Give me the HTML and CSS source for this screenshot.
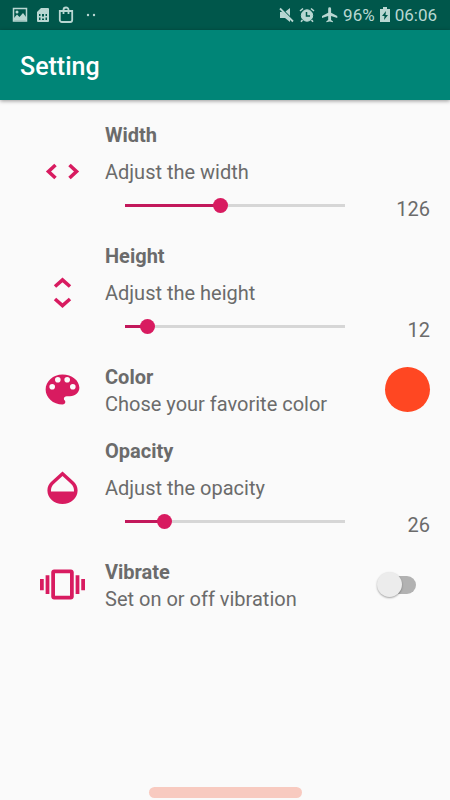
FILE: index.html
```html
<!DOCTYPE html>
<html lang="en">
<head>
<meta charset="utf-8">
<meta name="viewport" content="width=device-width, initial-scale=1">
<title>Setting</title>
<link rel="stylesheet" href="styles.css">
</head>
<body>
<div class="status-bar">
  <div class="status-group status-left">
    <svg width="16" height="16" viewBox="0 0 16 16" fill="none"><path d="M1.500 1.500h13v12.500h-13z" stroke="currentColor" stroke-width="1.500"/><path fill="currentColor" d="M2 11l3-3.500 2.500 2.500L11 6l3 4V13.500H2z"/><circle cx="5" cy="5" r="1.500" fill="currentColor"/></svg>
    <svg width="14" height="16" viewBox="0 0 14 16"><path fill="currentColor" fill-rule="evenodd" d="M5 1h7a1 1 0 0 1 1 1v12a1 1 0 0 1-1 1H2a1 1 0 0 1-1-1V5zM3 7v2h1.500V7zm3 0v2.500h2V7zm3.500 0v2H11V7zM3 10.500v2.500h1.500v-2.500zm3 1V13h2v-1.500zm3.500-1v2.500H11v-2.500z"/></svg>
    <svg width="16" height="18" viewBox="0 0 16 18" fill="none" stroke="currentColor" stroke-width="1.800"><path d="M1.800 5h12.400v9a2 2 0 0 1-2 2H3.800a2 2 0 0 1-2-2z"/><path d="M5.500 8V4a2.500 2.500 0 0 1 5 0v4"/></svg>
    <svg class="dots" width="10" height="4" viewBox="0 0 10 4" fill="currentColor"><circle cx="2" cy="2" r="1.200"/><circle cx="8" cy="2" r="1.200"/></svg>
  </div>
  <div class="status-group">
    <svg width="15" height="16" viewBox="0 0 15 16"><path fill="currentColor" d="M1 5h2.500l7.500 7v3L6 11H1zM6.500 4.500L11 1v8z"/><path d="M1 1.500l13 13" stroke="currentColor" stroke-width="1.800"/></svg>
    <svg width="16" height="16" viewBox="0 0 16 16" fill="none" stroke="currentColor"><circle cx="8" cy="8.500" r="5.700" fill="currentColor"/><path d="M1 4l3-2.500M15 4l-3-2.500M3.500 13L2 14.800M12.500 13l1.500 1.800" stroke-width="1.600"/><path class="clock-hands" d="M7.500 5v4H11" stroke-width="1.500"/></svg>
    <svg class="plane" width="16" height="18" viewBox="1 1 22 22"><path fill="currentColor" d="M22 16v-2.500L13.500 9V3.500a2 2 0 0 0-4 0V9L1 13.500V16l8.500-2.500V19l-2.500 1.500V22l4.500-1 4.500 1v-1.500L13.500 19v-5.500z"/></svg>
    <span>96%</span>
    <svg width="10" height="16" viewBox="0 0 10 16"><path fill="currentColor" fill-rule="evenodd" d="M3 0h4v2h3v13H0V2h3zM6 4L2 9h2.500L4 13l4-5H5.500z"/></svg>
    <span>06:06</span>
  </div>
</div>
<header class="app-bar"><h1>Setting</h1></header>
<main class="settings">
  <section class="row">
    <svg class="icon" viewBox="0 0 45 45" fill="none" stroke="currentColor" stroke-width="3.600"><path d="M15.500 16L8.500 22.500l7 6.500M29.500 16l7 6.500-7 6.500"/></svg>
    <div class="body">
      <h2>Width</h2>
      <label class="hint" for="width">Adjust the width</label>
      <div class="control">
        <input type="range" id="width" min="0" max="292" value="126" style="--fill:44%">
        <output for="width">126</output>
      </div>
    </div>
  </section>
  <section class="row">
    <svg class="icon" viewBox="0 0 45 45" fill="none" stroke="currentColor" stroke-width="3.600"><path d="M15 16.500l7.500-6.500 7.500 6.500M15 29l7.500 6.500 7.500-6.500"/></svg>
    <div class="body">
      <h2>Height</h2>
      <label class="hint" for="height">Adjust the height</label>
      <div class="control">
        <input type="range" id="height" min="0" max="168" value="12" style="--fill:10%">
        <output for="height">12</output>
      </div>
    </div>
  </section>
  <section class="row">
    <svg class="icon" viewBox="0 0 24 24"><path fill="currentColor" fill-rule="evenodd" d="M12 4c-5 0-9 3.600-9 8s4 8 9 8c.830 0 1.500-.600 1.500-1.330 0-.350-.150-.660-.390-.890-.230-.240-.380-.550-.380-.890 0-.740.670-1.330 1.500-1.330H16c2.760 0 5-1.990 5-4.450C21 7.180 16.970 4 12 4zM6.500 12a1.500 1.500 0 1 1 0-3 1.500 1.500 0 0 1 0 3zm3-3.700a1.500 1.500 0 1 1 0-3 1.500 1.500 0 0 1 0 3zm5 0a1.500 1.500 0 1 1 0-3 1.500 1.500 0 0 1 0 3zm3 3.700a1.500 1.500 0 1 1 0-3 1.500 1.500 0 0 1 0 3z"/></svg>
    <div class="body compact">
      <h2>Color</h2>
      <label class="hint" for="color">Chose your favorite color</label>
    </div>
    <button class="swatch" id="color" type="button"></button>
  </section>
  <section class="row">
    <svg class="icon" viewBox="0 0 45 45"><path fill="currentColor" fill-rule="evenodd" d="M22.500 6.500L33 16c3 2.700 4.600 5.800 4.600 9.500C37.600 33 31 39 22.500 39S7.400 33 7.400 25.500c0-3.700 1.600-6.800 4.600-9.500zM11 26.500h23c.200-3.500-.800-5.700-3.600-8.200L22.500 11l-7.900 7.300c-2.800 2.500-3.800 4.700-3.600 8.200z"/></svg>
    <div class="body">
      <h2>Opacity</h2>
      <label class="hint" for="opacity">Adjust the opacity</label>
      <div class="control">
        <input type="range" id="opacity" min="0" max="169" value="26" style="--fill:18%">
        <output for="opacity">26</output>
      </div>
    </div>
  </section>
  <section class="row">
    <svg class="icon" viewBox="0 0 24 24"><path fill="currentColor" fill-rule="evenodd" d="M0 15h2V9H0zm3 2h2V7H3zm19-8v6h2V9zm-3 8h2V7h-2zM16.500 4h-9C6.670 4 6 4.670 6 5.500v13c0 .830.670 1.500 1.500 1.500h9c.830 0 1.500-.670 1.500-1.500v-13c0-.830-.670-1.500-1.500-1.500zM16 18H8V6h8z"/></svg>
    <div class="body compact">
      <h2>Vibrate</h2>
      <label class="hint" for="vibrate">Set on or off vibration</label>
    </div>
    <input class="switch" type="checkbox" role="switch" id="vibrate">
  </section>
</main>
<div class="edge-handle"></div>
</body>
</html>
```
FILE: styles.css
```css
* {
  box-sizing: border-box;
}

body {
  margin: 0;
  min-height: 100vh;
  display: flex;
  flex-direction: column;
  background: #fafafa;
  color: #6b6b6b;
  font: 20px/27px Roboto, sans-serif;
}

h1, h2 {
  margin: 0;
}

.status-bar {
  display: flex;
  justify-content: space-between;
  align-items: center;
  height: 30px;
  padding: 0 13px 0 12px;
  background: #00574b;
  color: #b9d7d2;
  font-size: 17px;
}

.status-group {
  display: flex;
  align-items: center;
  gap: 5px;
}

.status-left {
  gap: 8px;
}

.dots {
  margin-left: 4px;
}

.plane {
  margin-left: 2px;
}

.clock-hands {
  stroke: #00574b;
}

.app-bar {
  display: flex;
  align-items: center;
  height: 70px;
  padding: 2px 20px 0;
  background: #008577;
  color: #fff;
  box-shadow: 0 1px 4px rgba(0, 0, 0, 0.4);
}

.app-bar h1 {
  font-size: 25px;
  font-weight: 500;
}

.settings {
  flex: 1;
  display: flex;
  flex-direction: column;
  gap: 20px;
  padding: 22px 20px 20px 40px;
}

.row {
  display: flex;
  align-items: center;
}

.icon {
  flex: none;
  width: 45px;
  height: 45px;
  margin: 0 20px 3px 0;
  color: #d81b60;
}

.body {
  flex: 1;
  display: flex;
  flex-direction: column;
  gap: 10px;
}

.compact {
  gap: 0;
}

.body h2 {
  font-size: 20px;
  font-weight: 700;
}

.control {
  display: flex;
  height: 27px;
  padding-left: 20px;
}

input {
  appearance: none;
  margin: 0;
}

input[type="range"] {
  flex: 1;
  min-width: 0;
  height: 19px;
  background: linear-gradient(to right, #c2185b var(--fill), #d6d6d6 var(--fill)) center / 100% 3px no-repeat;
}

input[type="range"]::-webkit-slider-thumb {
  appearance: none;
  width: 15px;
  height: 15px;
  border-radius: 50%;
  background: #d81b60;
}

output {
  width: 85px;
  text-align: right;
}

.swatch {
  width: 45px;
  height: 45px;
  margin-bottom: 3px;
  padding: 0;
  border: 0;
  border-radius: 50%;
  background: #ff4722;
}

.switch {
  display: flex;
  align-items: center;
  width: 38px;
  height: 18px;
  margin: 0 14px 3px 0;
  border-radius: 9px;
  background: #b2b2b2;
}

.switch::before {
  content: "";
  flex: none;
  width: 25px;
  height: 25px;
  margin-left: -1px;
  border-radius: 50%;
  background: #ececec;
  box-shadow: 0 1px 2px rgba(0, 0, 0, 0.35);
}

.switch:checked {
  justify-content: flex-end;
}

.edge-handle {
  align-self: center;
  width: 34%;
  height: 11px;
  margin-bottom: 2px;
  border-radius: 6px;
  background: #f8cac0;
}
```
